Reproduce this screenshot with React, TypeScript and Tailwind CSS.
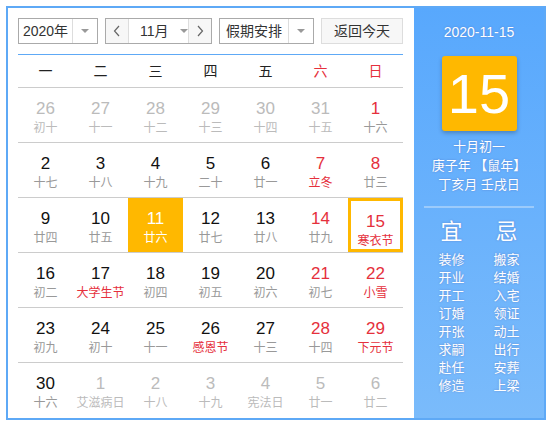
import React from "react";

type Day = {
  n: number;
  lunar: string;
  other?: boolean;
  redNum?: boolean;
  redLunar?: boolean;
  selected?: boolean;
  today?: boolean;
};

const FONT = '"Liberation Sans", "Noto Sans CJK SC", sans-serif';

const WEEK = ["一", "二", "三", "四", "五", "六", "日"];

const ROWS: Day[][] = [
  [
    { n: 26, lunar: "初十", other: true },
    { n: 27, lunar: "十一", other: true },
    { n: 28, lunar: "十二", other: true },
    { n: 29, lunar: "十三", other: true },
    { n: 30, lunar: "十四", other: true },
    { n: 31, lunar: "十五", other: true },
    { n: 1, lunar: "十六", redNum: true },
  ],
  [
    { n: 2, lunar: "十七" },
    { n: 3, lunar: "十八" },
    { n: 4, lunar: "十九" },
    { n: 5, lunar: "二十" },
    { n: 6, lunar: "廿一" },
    { n: 7, lunar: "立冬", redNum: true, redLunar: true },
    { n: 8, lunar: "廿三", redNum: true },
  ],
  [
    { n: 9, lunar: "廿四" },
    { n: 10, lunar: "廿五" },
    { n: 11, lunar: "廿六", selected: true },
    { n: 12, lunar: "廿七" },
    { n: 13, lunar: "廿八" },
    { n: 14, lunar: "廿九", redNum: true },
    { n: 15, lunar: "寒衣节", redNum: true, redLunar: true, today: true },
  ],
  [
    { n: 16, lunar: "初二" },
    { n: 17, lunar: "大学生节", redLunar: true },
    { n: 18, lunar: "初四" },
    { n: 19, lunar: "初五" },
    { n: 20, lunar: "初六" },
    { n: 21, lunar: "初七", redNum: true },
    { n: 22, lunar: "小雪", redNum: true, redLunar: true },
  ],
  [
    { n: 23, lunar: "初九" },
    { n: 24, lunar: "初十" },
    { n: 25, lunar: "十一" },
    { n: 26, lunar: "感恩节", redLunar: true },
    { n: 27, lunar: "十三" },
    { n: 28, lunar: "十四", redNum: true },
    { n: 29, lunar: "下元节", redNum: true, redLunar: true },
  ],
  [
    { n: 30, lunar: "十六" },
    { n: 1, lunar: "艾滋病日", other: true },
    { n: 2, lunar: "十八", other: true },
    { n: 3, lunar: "十九", other: true },
    { n: 4, lunar: "宪法日", other: true },
    { n: 5, lunar: "廿一", other: true },
    { n: 6, lunar: "廿二", other: true },
  ],
];

const YI = ["装修", "开业", "开工", "订婚", "开张", "求嗣", "赴任", "修造"];
const JI = ["搬家", "结婚", "入宅", "领证", "动土", "出行", "安葬", "上梁"];

function Caret() {
  return (
    <span className="h-0 w-0 border-x-[4px] border-t-[4px] border-x-transparent border-t-[#999]" />
  );
}

function Chevron({ dir }: { dir: "left" | "right" }) {
  return (
    <svg width="8" height="12" viewBox="0 0 8 12" aria-hidden>
      <path
        d={dir === "left" ? "M6 1 L1.5 6 L6 11" : "M2 1 L6.5 6 L2 11"}
        fill="none"
        stroke="#666"
        strokeWidth="1.2"
      />
    </svg>
  );
}

function DayCell({ d }: { d: Day }) {
  let numColor = "text-[#111]";
  let lunarColor = "text-[#999]";
  if (d.other) {
    numColor = "text-[#bbb]";
    lunarColor = "text-[#bbb]";
  }
  if (d.redNum) numColor = "text-[#e5303c]";
  if (d.redLunar) lunarColor = "text-[#e5303c]";
  if (d.selected) {
    numColor = "text-white";
    lunarColor = "text-white";
  }

  const box = d.selected
    ? "bg-[#ffb800]"
    : d.today
      ? "border-[3px] border-[#ffb800] pt-[8px]"
      : "";

  return (
    <div className={`flex h-[54px] flex-col items-center pt-[11px] ${box}`}>
      <span className={`text-[17px] leading-[20px] ${numColor}`}>{d.n}</span>
      <span className={`mt-[1px] whitespace-nowrap text-[12px] leading-[16px] ${lunarColor}`}>
        {d.lunar}
      </span>
    </div>
  );
}

export default function App() {
  return (
    <div className="bg-white pl-[6px] pt-[6px]" style={{ fontFamily: FONT }}>
      <div className="flex h-[414px] w-[540px] border-2 border-[#5ea9f6]">
        {/* Calendar side */}
        <div className="w-[406px] px-[10px] pt-[10px]">
          <div className="flex h-[26px] text-[14px] text-[#333]">
            <div className="flex w-[80px] border border-[#aaa]">
              <span className="flex flex-1 items-center justify-center">2020年</span>
              <span className="flex w-[25px] items-center justify-center border-l border-[#ddd]">
                <Caret />
              </span>
            </div>
            <div className="ml-[7px] flex w-[107px] border border-[#aaa]">
              <span className="flex w-[22px] items-center justify-center bg-[#f7f7f7]">
                <Chevron dir="left" />
              </span>
              <span className="flex flex-1 items-center border-x border-[#ddd] pl-[11px]">
                <span>11月</span>
                <span className="ml-[11px] flex">
                  <Caret />
                </span>
              </span>
              <span className="flex w-[22px] items-center justify-center bg-[#f7f7f7]">
                <Chevron dir="right" />
              </span>
            </div>
            <div className="ml-[7px] flex w-[95px] border border-[#aaa]">
              <span className="flex flex-1 items-center justify-center">假期安排</span>
              <span className="flex w-[25px] items-center justify-center border-l border-[#ddd]">
                <Caret />
              </span>
            </div>
            <button className="ml-[7px] flex w-[82px] items-center justify-center border border-[#ddd] bg-[#f7f7f7] text-[#333]">
              返回今天
            </button>
          </div>

          <div className="mt-[10px] h-px w-[385px] bg-[#5ea9f6]" />

          <div className="grid h-[33px] w-[385px] grid-cols-7 items-center border-b border-[#ccc] text-[14px]">
            {WEEK.map((w, i) => (
              <span
                key={w}
                className={`text-center ${i >= 5 ? "text-[#e5303c]" : "text-[#222]"}`}
              >
                {w}
              </span>
            ))}
          </div>

          {ROWS.map((row, ri) => (
            <div
              key={ri}
              className={`grid w-[385px] grid-cols-7 ${ri > 0 ? "border-t border-[#ccc]" : ""}`}
            >
              {row.map((d, di) => (
                <DayCell key={di} d={d} />
              ))}
            </div>
          ))}
        </div>

        {/* Info side */}
        <div className="flex flex-1 flex-col items-center bg-gradient-to-b from-[#58a8fd] to-[#7abbfb] pt-[14px] text-white [text-shadow:0_0_2px_rgba(60,40,120,0.35)]">
          <div className="text-[14px] leading-[20px]">2020-11-15</div>
          <div className="mt-[14px] flex h-[75px] w-[75px] items-center justify-center rounded-[3px] bg-[#ffb800] text-[56px] leading-none shadow-[0_2px_4px_rgba(0,0,0,0.25)] [text-shadow:none]">
            15
          </div>
          <div className="mt-[6px] text-[13px] leading-[19px]">十月初一</div>
          <div className="text-[13px] leading-[19px]">庚子年 【鼠年】</div>
          <div className="text-[13px] leading-[19px]">丁亥月 壬戌日</div>
          <div className="mt-[12px] h-[2px] w-[110px] bg-[#9ccbfb]" />
          <div className="mt-[11px] flex gap-[15px]">
            {[
              { t: "宜", items: YI },
              { t: "忌", items: JI },
            ].map((col) => (
              <div key={col.t} className="flex w-[40px] flex-col items-center">
                <span className="text-[22px] leading-[26px]">{col.t}</span>
                <div className="mt-[6px] flex flex-col items-center">
                  {col.items.map((it) => (
                    <span key={it} className="text-[13px] leading-[18px]">
                      {it}
                    </span>
                  ))}
                </div>
              </div>
            ))}
          </div>
        </div>
      </div>
    </div>
  );
}
